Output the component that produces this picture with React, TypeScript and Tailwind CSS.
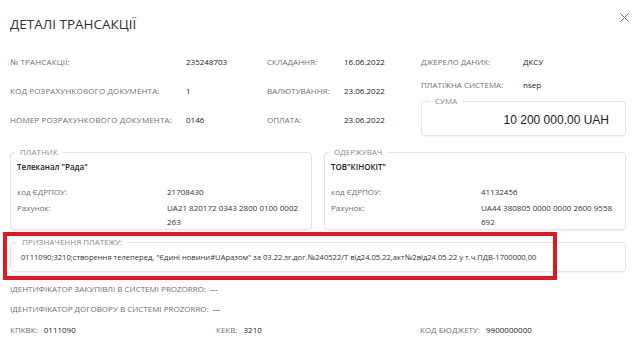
const font = "font-['Open_Sans','Liberation_Sans',sans-serif]";

function Label({ children, className = "" }: { children: React.ReactNode; className?: string }) {
  return <span className={`text-[8px] leading-[12px] uppercase text-[#707070] ${className}`}>{children}</span>;
}

function Value({ children }: { children: React.ReactNode }) {
  return <span className="text-[8px] leading-[12px] text-[#222]">{children}</span>;
}

function Party({
  title,
  name,
  code,
  account,
}: {
  title: string;
  name: string;
  code: string;
  account: string;
}) {
  return (
    <fieldset className="rounded-[4px] border border-[#e4e4e4] px-[6px] pb-0 shadow-[0_1px_2px_rgba(0,0,0,0.06)]">
      <legend className="ml-[-2px] px-[5px] text-[8px] leading-[12px] uppercase text-[#8a8a8a]">
        {title}
      </legend>
      <div className="pt-[2px] text-[8px] leading-[14px] font-semibold text-[#222] mb-[11px]">{name}</div>
      <div className="grid grid-cols-[150px_1fr] gap-y-[2px] text-[8px] leading-[14px]">
        <span className="text-[#707070]">код ЄДРПОУ:</span>
        <span className="text-[#333]">{code}</span>
        <span className="text-[#707070]">Рахунок:</span>
        <span className="text-[#333] w-[136px]">{account}</span>
      </div>
    </fieldset>
  );
}

export default function App() {
  const rows = [
    ["№ ТРАНСАКЦІЇ:", "235248703", "СКЛАДАННЯ:", "16.06.2022"],
    ["КОД РОЗРАХУНКОВОГО ДОКУМЕНТА:", "1", "ВАЛЮТУВАННЯ:", "23.06.2022"],
    ["НОМЕР РОЗРАХУНКОВОГО ДОКУМЕНТА:", "0146", "ОПЛАТА:", "23.06.2022"],
  ];

  return (
    <div className={`w-[640px] h-[348px] bg-white pl-[10px] pr-[14px] ${font} overflow-hidden`}>
      {/* header */}
      <div className="h-[47px] flex items-start justify-between">
        <h1 className="mt-[15px] text-[13.5px] leading-[18px] text-[#333]">ДЕТАЛІ ТРАНСАКЦІЇ</h1>
        <svg className="mt-[13px] -mr-[3px]" width="9" height="9" viewBox="0 0 9 9">
          <path d="M0.5 0.5L8.5 8.5M8.5 0.5L0.5 8.5" stroke="#666" strokeWidth="1" />
        </svg>
      </div>

      {/* main info */}
      <div className="flex">
        <div className="grid grid-cols-[176px_81px_77px_77px] auto-rows-[29px] items-center">
          {rows.map((r) => (
            <>
              <Label key={r[0]} className="tracking-[0.15px]">{r[0]}</Label>
              <Value>{r[1]}</Value>
              <Label>{r[2]}</Label>
              <Value>{r[3]}</Value>
            </>
          ))}
        </div>
        <div className="flex-1 flex flex-col">
          <div className="h-[29px] flex items-center">
            <Label className="w-[102px]">ДЖЕРЕЛО ДАНИХ:</Label>
            <Value>ДКСУ</Value>
          </div>
          <div className="h-[17px] flex items-center">
            <Label className="w-[102px]">ПЛАТІЖНА СИСТЕМА:</Label>
            <Value>nsep</Value>
          </div>
          <fieldset className="mt-[2px] h-[41px] rounded-[4px] border border-[#e4e4e4] px-[16px] shadow-[0_1px_2px_rgba(0,0,0,0.06)] flex">
            <legend className="ml-[-8px] px-[5px] text-[8px] leading-[12px] uppercase text-[#8a8a8a]">СУМА</legend>
            <div className="w-full text-right font-['Liberation_Sans',Arial,sans-serif] text-[12px] leading-[18px] text-[#222] mt-[4px]">
              10 200 000.00 UAH
            </div>
          </fieldset>
        </div>
      </div>

      {/* parties */}
      <div className="mt-[10px] grid grid-cols-2 gap-[12px]">
        <Party
          title="ПЛАТНИК"
          name={'Телеканал "Рада"'}
          code="21708430"
          account="UA21 820172 0343 2800 0100 0002 263"
        />
        <Party
          title="ОДЕРЖУВАЧ"
          name={'ТОВ"КІНОКІТ"'}
          code="41132456"
          account="UA44 380805 0000 0000 2600 9558 692"
        />
      </div>

      {/* purpose */}
      <div className="relative mt-[6px]">
        <fieldset className="rounded-[4px] border border-[#e4e4e4] px-[10px] pb-[7px] shadow-[0_1px_2px_rgba(0,0,0,0.06)]">
          <legend className="ml-[-4px] px-[5px] text-[8px] leading-[12px] uppercase text-[#8a8a8a]">
            ПРИЗНАЧЕННЯ ПЛАТЕЖУ:
          </legend>
          <div className="pt-[2px] text-[7.6px] leading-[14px] text-[#333] whitespace-nowrap">
            0111090;3210;створення телеперед, "Єдині новини#UAразом" за 03.22.зг.дог.№240522/Т від24.05.22,акт№2від24.05.22 у т.ч.ПДВ-1700000,00
          </div>
        </fieldset>
        <div className="absolute left-[-7px] top-[-4px] w-[554px] h-[48px] border-[4px] border-[#dd1a22] pointer-events-none" />
      </div>

      {/* bottom */}
      <div className="mt-[11px] flex flex-col gap-[8px] text-[8px] leading-[12px]">
        <div className="flex gap-[4px]">
          <Label>ІДЕНТИФІКАТОР ЗАКУПІВЛІ В СИСТЕМІ PROZORRO:</Label>
          <Value>---</Value>
        </div>
        <div className="flex gap-[4px]">
          <Label>ІДЕНТИФІКАТОР ДОГОВОРУ В СИСТЕМІ PROZORRO:</Label>
          <Value>---</Value>
        </div>
        <div className="mt-[1px] grid grid-cols-[206px_204px_1fr]">
          <div className="flex gap-[6px]">
            <Label>КПКВК:</Label>
            <Value>0111090</Value>
          </div>
          <div className="flex gap-[6px]">
            <Label>КЕКВ:</Label>
            <Value>3210</Value>
          </div>
          <div className="flex gap-[6px]">
            <Label>КОД БЮДЖЕТУ:</Label>
            <Value>9900000000</Value>
          </div>
        </div>
      </div>
    </div>
  );
}
